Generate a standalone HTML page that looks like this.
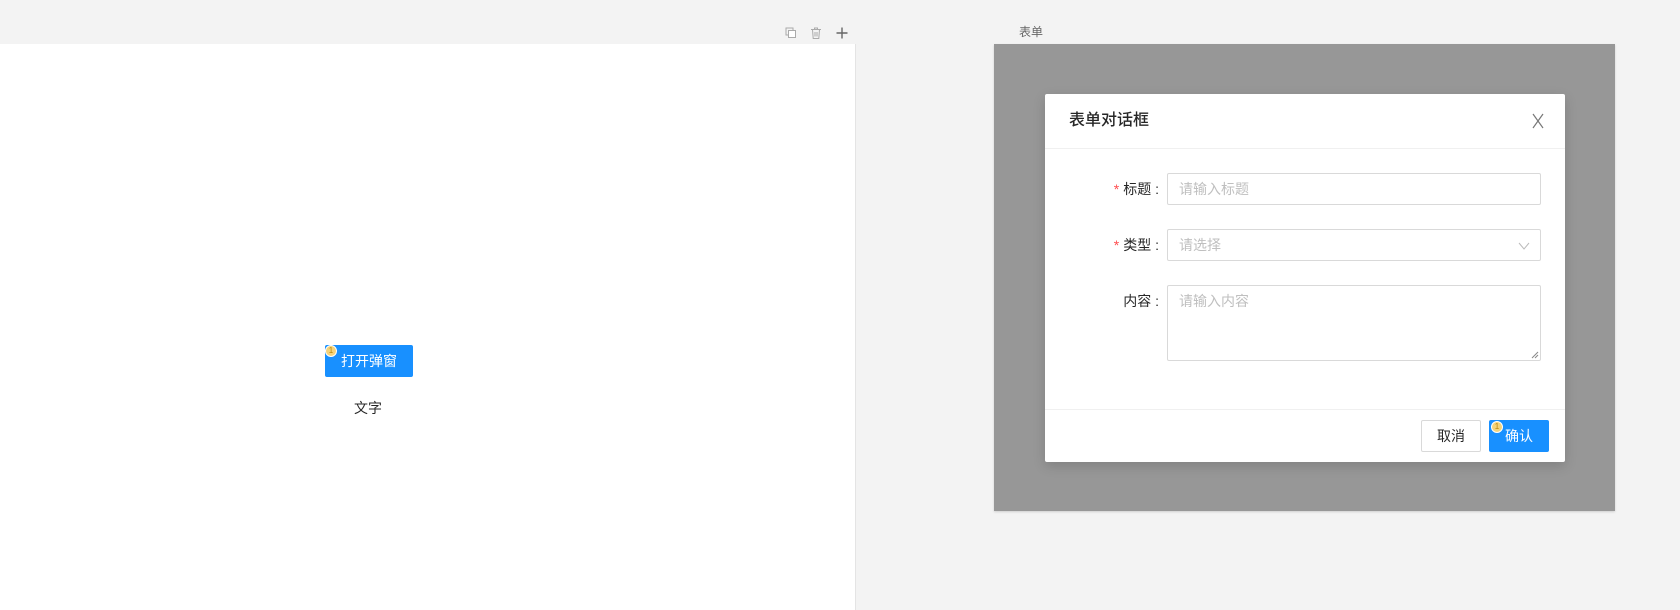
<!DOCTYPE html>
<html><head><meta charset="utf-8"><style>
*{box-sizing:border-box;margin:0;padding:0}
body{width:1680px;height:610px;background:#f3f3f3;position:relative;overflow:hidden;font-family:"Liberation Sans","Noto Sans CJK SC",sans-serif;font-size:14px;color:rgba(0,0,0,.85)}
.abs{position:absolute}
.white{left:0;top:44px;width:856px;height:566px;background:#fff;border-right:1px solid #e4e4e4}
.btn{display:flex;align-items:center;justify-content:center;border-radius:2px;font-size:14px}
.primary{background:#1890ff;color:#fff}
.badge{width:12px;height:12px;border-radius:50%;background:#f5d37a;border:1px solid #fff;font-size:8px;color:#b8860b;text-align:center;line-height:10px}
.input{background:#fff;border:1px solid #d9d9d9;border-radius:2px;color:#bfbfbf;padding:0 11px;display:flex;align-items:center}
.lbl{text-align:right;width:100px}
.star{color:#ff4d4f;margin-right:4px;font-family:"Liberation Sans",sans-serif}
</style></head><body>
<div class="abs white"></div>
<svg class="abs" style="left:784px;top:26px" width="14" height="14" viewBox="0 0 14 14"><rect x="2" y="2" width="7" height="7" fill="none" stroke="#aaa"/><rect x="4.5" y="4.5" width="7" height="7" fill="#fff" stroke="#aaa"/></svg>
<svg class="abs" style="left:809px;top:26px" width="14" height="14" viewBox="0 0 14 14"><path d="M2 3.5h10M5.5 3.5V2h3v1.5M3.5 3.5l.7 9h5.6l.7-9M6 6v4.5M8 6v4.5" fill="none" stroke="#aaa"/></svg>
<svg class="abs" style="left:835px;top:26px" width="14" height="14" viewBox="0 0 14 14"><path d="M7 1.5v11M1.5 7h11" stroke="#666" stroke-width="1.4"/></svg>
<div class="abs btn primary" style="left:325px;top:345px;width:88px;height:32px">打开弹窗</div>
<div class="abs badge" style="left:325px;top:345px">1</div>
<div class="abs" style="left:354px;top:398px">文字</div>
<div class="abs" style="left:1019px;top:23px;font-size:12px;color:#666">表单</div>
<div class="abs" style="left:994px;top:44px;width:621px;height:467px;background:#979797;box-shadow:0 1px 2px rgba(0,0,0,.15)"></div>
<div class="abs" style="left:1045px;top:94px;width:520px;height:368px;background:#fff;border-radius:2px;box-shadow:0 4px 12px rgba(0,0,0,.15)">
  <div class="abs" style="left:24px;top:16px;font-size:16px;line-height:22px;font-weight:500">表单对话框</div>
  <svg class="abs" style="left:487px;top:19px" width="12" height="16" viewBox="0 0 12 16"><path d="M1 1l10 14M11 1L1 15" stroke="#777" stroke-width="1.2"/></svg>
  <div class="abs" style="left:0;top:54px;width:520px;height:1px;background:#f0f0f0"></div>
  <div class="abs lbl" style="left:14px;top:85px"><span class="star">*</span>标题 :</div>
  <div class="abs input" style="left:122px;top:79px;width:374px;height:32px">请输入标题</div>
  <div class="abs lbl" style="left:14px;top:141px"><span class="star">*</span>类型 :</div>
  <div class="abs input" style="left:122px;top:135px;width:374px;height:32px">请选择
    <svg class="abs" style="right:10px;top:10px" width="12" height="12" viewBox="0 0 12 12"><path d="M1 3l5 6 5-6" fill="none" stroke="#bbb"/></svg></div>
  <div class="abs lbl" style="left:14px;top:197px">内容 :</div>
  <div class="abs input" style="left:122px;top:191px;width:374px;height:76px;align-items:flex-start;padding-top:5px">请输入内容
    <svg class="abs" style="right:1px;bottom:1px" width="8" height="8" viewBox="0 0 8 8"><path d="M7 1L1 7M7 4L4 7" stroke="#888"/></svg></div>
  <div class="abs" style="left:0;top:315px;width:520px;height:1px;background:#f0f0f0"></div>
  <div class="abs btn" style="left:376px;top:326px;width:60px;height:32px;border:1px solid #d9d9d9">取消</div>
  <div class="abs btn primary" style="left:444px;top:326px;width:60px;height:32px">确认</div>
  <div class="abs badge" style="left:446px;top:327px">1</div>
</div>
</body></html>
